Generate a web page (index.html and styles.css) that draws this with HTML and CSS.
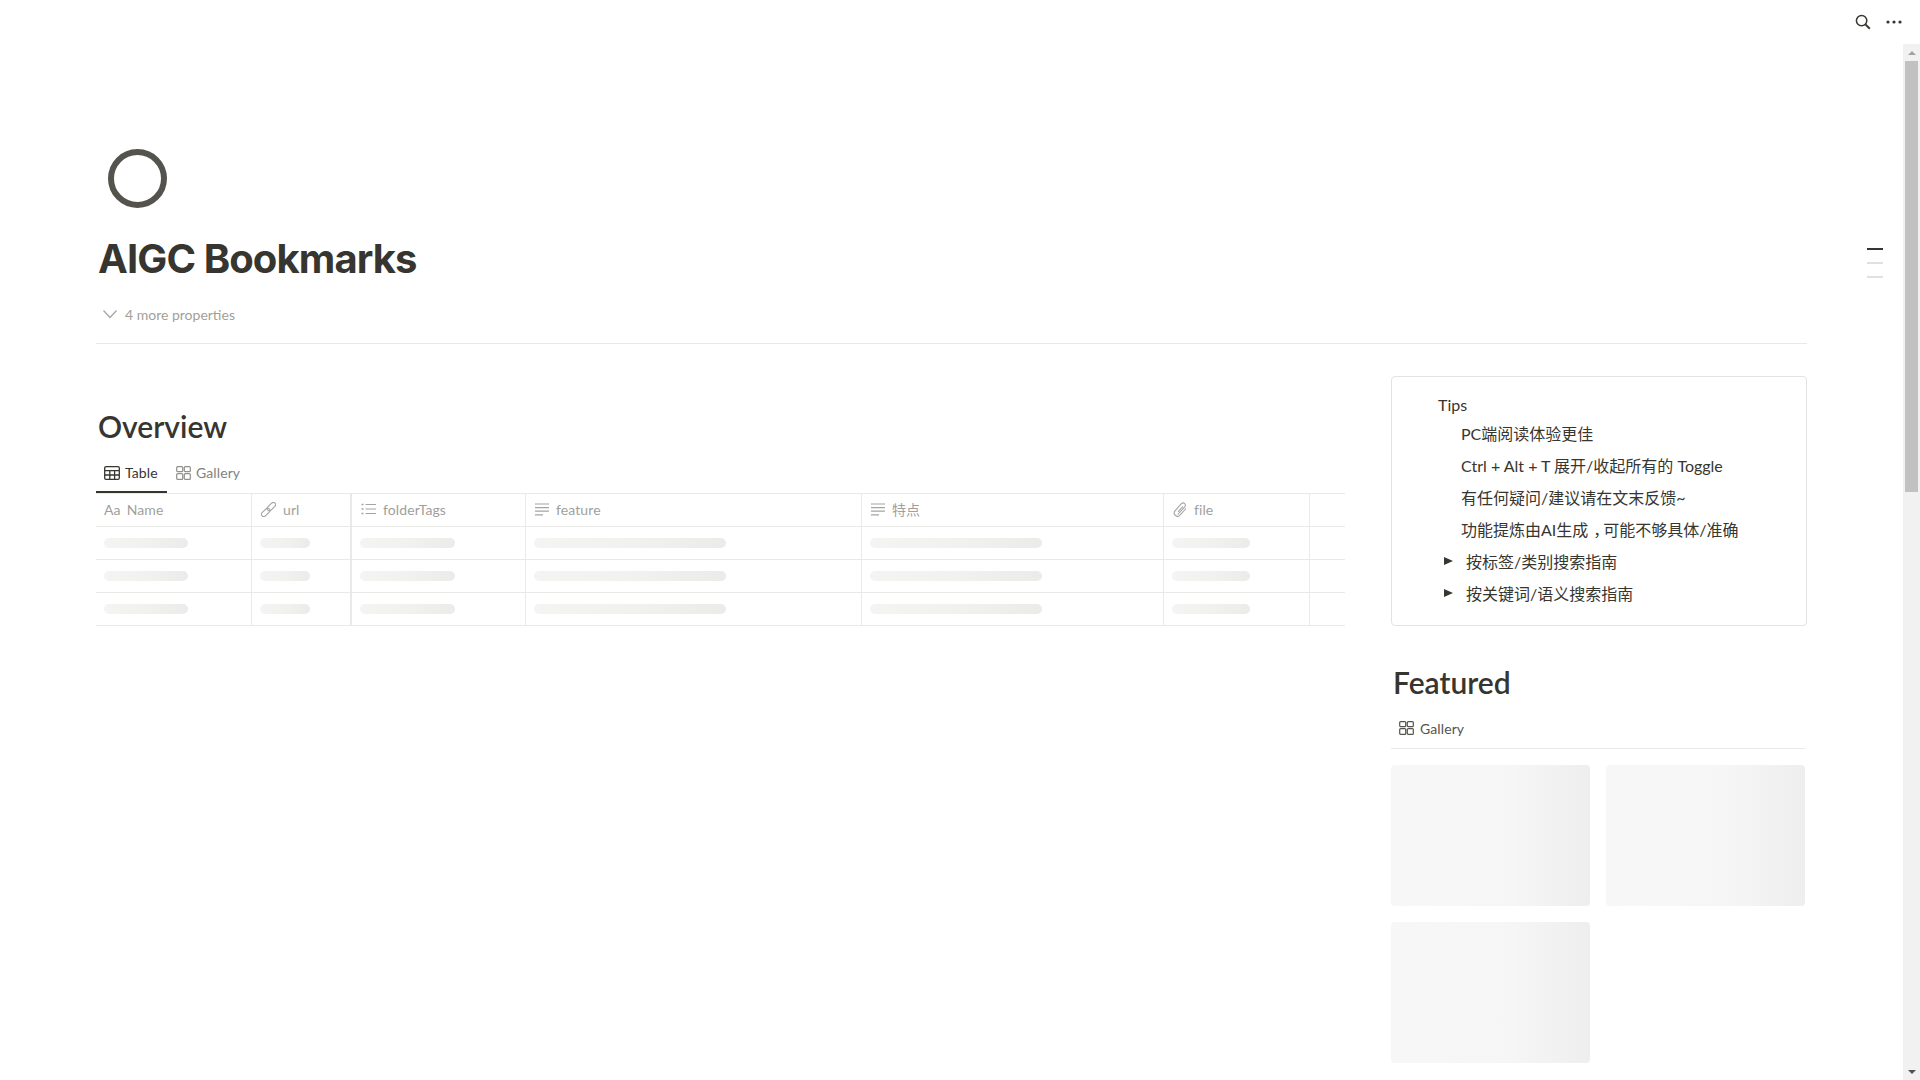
FILE: index.html
```html
<!DOCTYPE html>
<html lang="zh">
<head>
<meta charset="utf-8">
<title>AIGC Bookmarks</title>
<link rel="stylesheet" href="styles.css">
</head>
<body>
<div class="app">
  <header class="topbar">
    <svg class="top-icon" width="16" height="16" viewBox="0 0 16 16"><circle cx="6.6" cy="6.6" r="5.2" fill="none" stroke="#37352f" stroke-width="1.5"/><path d="M10.4 10.4 L14.8 14.8" stroke="#37352f" stroke-width="2"/></svg>
    <svg class="top-icon" width="16" height="4" viewBox="0 0 16 4"><circle cx="2" cy="2" r="1.6" fill="#37352f"/><circle cx="8" cy="2" r="1.6" fill="#37352f"/><circle cx="14" cy="2" r="1.6" fill="#37352f"/></svg>
  </header>
  <div class="frame">
    <main class="page">
      <div class="page-icon"></div>
      <h1 class="title">AIGC Bookmarks</h1>
      <div class="props">
        <svg width="16" height="10" viewBox="0 0 16 10"><path d="M1.5 1.5 L8 8.5 L14.5 1.5" fill="none" stroke="#a5a4a1" stroke-width="1.2"/></svg>
        <span>4 more properties</span>
      </div>
      <hr class="rule">
      <div class="columns">
        <section class="left">
          <h2 class="heading">Overview</h2>
          <div class="tabs">
            <div class="tab active">
              <svg width="16" height="14" viewBox="0 0 16 14"><path d="M2 .7h12a1.3 1.3 0 0 1 1.3 1.3v10a1.3 1.3 0 0 1-1.3 1.3H2A1.3 1.3 0 0 1 .7 12V2A1.3 1.3 0 0 1 2 .7zM.7 4.7h14.6M.7 9h14.6M5.8 4.7v8.6M10.6 4.7v8.6" fill="none" stroke="#37352f" stroke-width="1.3"/></svg>
              <span>Table</span>
            </div>
            <div class="tab">
              <svg width="15" height="14" viewBox="0 0 15 14"><path d="M1.6.7h4.2a.9.9 0 0 1 .9.9v3.1a.9.9 0 0 1-.9.9H1.6a.9.9 0 0 1-.9-.9V1.600a.9.9 0 0 1 .9-.9zM9.200.7h4.200a.9.9 0 0 1 .9.9v3.1a.9.9 0 0 1-.9.9H9.200a.9.9 0 0 1-.9-.9V1.600a.9.9 0 0 1 .9-.9zM1.600 7.700h4.200a.9.9 0 0 1 .9.9v3.800a.9.9 0 0 1-.9.9H1.600a.9.9 0 0 1-.9-.9V8.600a.9.9 0 0 1 .9-.9zM9.200 7.700h4.200a.9.9 0 0 1 .9.9v3.800a.9.9 0 0 1-.9.9H9.200a.9.9 0 0 1-.9-.9V8.600a.9.9 0 0 1 .9-.9z" fill="none" stroke="#91908c" stroke-width="1.200"/></svg>
              <span>Gallery</span>
            </div>
          </div>
          <div class="table">
            <div class="cell head c1"><span class="aa">Aa</span><span>Name</span></div>
            <div class="cell head c2">
              <svg width="15" height="15" viewBox="0 0 15 15"><g transform="rotate(-45 7.5 7.5)" fill="none" stroke="#a5a4a1" stroke-width="1.100"><rect x="-1.500" y="5.200" width="10" height="4.600" rx="2.300"/><rect x="6.500" y="5.200" width="10" height="4.600" rx="2.300"/></g></svg>
              <span>url</span></div>
            <div class="cell head c3">
              <svg width="15" height="12" viewBox="0 0 15 12"><path d="M4.500 1.500H15M4.500 6H15M4.500 10.500H15" stroke="#a5a4a1" stroke-width="1.100"/><path d="M.5 1.500h2M.5 6h2M.5 10.500h2" stroke="#a5a4a1" stroke-width="1.300"/></svg>
              <span>folderTags</span></div>
            <div class="cell head c4">
              <svg width="14" height="13" viewBox="0 0 14 13"><path d="M0 1h14M0 4.600h14M0 8.200h14M0 11.800h8" stroke="#a5a4a1" stroke-width="1.200"/></svg>
              <span>feature</span></div>
            <div class="cell head c5">
              <svg width="14" height="13" viewBox="0 0 14 13"><path d="M0 1h14M0 4.600h14M0 8.200h14M0 11.800h8" stroke="#a5a4a1" stroke-width="1.200"/></svg>
              <span>特点</span></div>
            <div class="cell head c6">
              <svg width="14" height="16" viewBox="0 0 14 16"><path d="M4.800 13.500 L11.800 5.800a2.300 2.300 0 0 0-3.400-3.100L2 9.800a3.300 3.300 0 0 0 4.800 4.500L13 7.500M5 10.800 L10 5.300" fill="none" stroke="#a5a4a1" stroke-width="1.100"/></svg>
              <span>file</span></div>
            <div class="cell c7"></div>

            <div class="cell c1"><i class="bar w1"></i></div><div class="cell c2"><i class="bar w2"></i></div><div class="cell c3"><i class="bar w3"></i></div><div class="cell c4"><i class="bar w4"></i></div><div class="cell c5"><i class="bar w5"></i></div><div class="cell c6"><i class="bar w6"></i></div><div class="cell c7"></div>
            <div class="cell c1"><i class="bar w1"></i></div><div class="cell c2"><i class="bar w2"></i></div><div class="cell c3"><i class="bar w3"></i></div><div class="cell c4"><i class="bar w4"></i></div><div class="cell c5"><i class="bar w5"></i></div><div class="cell c6"><i class="bar w6"></i></div><div class="cell c7"></div>
            <div class="cell c1"><i class="bar w1"></i></div><div class="cell c2"><i class="bar w2"></i></div><div class="cell c3"><i class="bar w3"></i></div><div class="cell c4"><i class="bar w4"></i></div><div class="cell c5"><i class="bar w5"></i></div><div class="cell c6"><i class="bar w6"></i></div><div class="cell c7"></div>
          </div>
        </section>
        <aside class="right">
          <div class="callout">
            <div class="tips-title">Tips</div>
            <div class="tip">PC端阅读体验更佳</div>
            <div class="tip">Ctrl + Alt + T 展开/收起所有的 Toggle</div>
            <div class="tip">有任何疑问/建议请在文末反馈~</div>
            <div class="tip">功能提炼由AI生成<span class="punct">，</span>可能不够具体/准确</div>
            <div class="toggle"><i class="tri"></i><span>按标签/类别搜索指南</span></div>
            <div class="toggle"><i class="tri"></i><span>按关键词/语义搜索指南</span></div>
          </div>
          <h2 class="heading featured">Featured</h2>
          <div class="gallery-block">
            <div class="gallery-tab">
              <svg width="15" height="14" viewBox="0 0 15 14"><path d="M1.600.7h4.200a.9.9 0 0 1 .9.9v3.100a.9.9 0 0 1-.9.9H1.600a.9.9 0 0 1-.9-.9V1.600a.9.9 0 0 1 .9-.9zM9.200.7h4.200a.9.9 0 0 1 .9.9v3.100a.9.9 0 0 1-.9.9H9.200a.9.9 0 0 1-.9-.9V1.600a.9.9 0 0 1 .9-.9zM1.600 7.700h4.200a.9.9 0 0 1 .9.9v3.800a.9.9 0 0 1-.9.9H1.600a.9.9 0 0 1-.9-.9V8.600a.9.9 0 0 1 .9-.9zM9.200 7.700h4.200a.9.9 0 0 1 .9.9v3.800a.9.9 0 0 1-.9.9H9.200a.9.9 0 0 1-.9-.9V8.600a.9.9 0 0 1 .9-.9z" fill="none" stroke="#55534e" stroke-width="1.200"/></svg>
              <span>Gallery</span>
            </div>
            <div class="cards">
              <div class="card"></div>
              <div class="card"></div>
              <div class="card"></div>
            </div>
          </div>
        </aside>
      </div>
      <div class="outline"><i class="mark on"></i><i class="mark"></i><i class="mark"></i></div>
    </main>
    <div class="scrollbar">
      <div class="sb-btn"><i class="sb-up"></i></div>
      <div class="sb-track"><div class="sb-thumb"></div></div>
      <div class="sb-btn"><i class="sb-down"></i></div>
    </div>
  </div>
</div>
</body>
</html>
```
FILE: styles.css
```css
* { box-sizing: border-box; }
html, body { margin: 0; height: 100%; overflow: hidden; background: #fff; }
body {
  font-family: Lato, "Noto Sans CJK SC", sans-serif;
  color: #37352f;
}
.app { display: flex; flex-direction: column; height: 100vh; }
.topbar {
  height: 44px; flex: none;
  display: flex; align-items: center; justify-content: flex-end;
  gap: 15px; padding: 0 18px 1px 0;
}
.frame { flex: 1; display: flex; min-height: 0; }
.page { flex: 1; min-width: 0; position: relative; overflow: hidden; padding: 0 96px; }
.page-icon {
  width: 59px; height: 59px; margin: 105px 0 0 12px;
  border: 6.5px solid #55534e; border-radius: 50%;
}
.title {
  margin: 27px 0 0 2px; font-family: Inter, "Noto Sans CJK SC", sans-serif;
  font-size: 40px; line-height: 48px; font-weight: 700; letter-spacing: -0.9px;
}
.props {
  display: flex; align-items: center; gap: 7px;
  height: 24px; margin: 19px 0 0 6px;
  font-size: 14px; color: #a09f9c;
}
.rule { margin: 17px 0 0; border: 0; height: 1px; background: #e9e9e7; }
.columns { display: flex; gap: 46px; margin-top: 32px; }
.left { width: 1249px; flex: none; padding-top: 30px; }
.right { width: 416px; flex: none; }
.heading { margin: 0 0 0 2px; font-size: 30px; line-height: 40px; font-weight: 600; }
.tabs { display: flex; height: 39px; margin-top: 8px; }
.tab {
  display: flex; align-items: center; gap: 5px;
  padding: 0 8px; font-size: 14px; letter-spacing: .1px; color: #83827e;
  border-bottom: 2px solid transparent;
}
.tab.active { color: #37352f; border-bottom-color: #37352f; width: 71px; }
.tab + .tab { padding-left: 9px; }
.table {
  display: grid;
  grid-template-columns: 156px 100px 174px 336px 302px 146px 35px;
  grid-auto-rows: 33px;
  border-top: 1px solid #e9e9e7;
}
.cell {
  display: flex; align-items: center; gap: 7px;
  padding: 0 8px;
  border-bottom: 1px solid #e9e9e7;
  border-right: 1px solid #e9e9e7;
}
.cell.c7 { border-right: 0; }
.cell.c2 { border-right-width: 2px; }
.head { font-size: 14px; letter-spacing: .1px; color: #a09f9c; padding-left: 9px; padding-bottom: 2px; }
.head.c1 { padding-left: 8px; gap: 6px; }
.head svg { flex: none; }
.aa { font-size: 14px; color: #a09f9c; }
.bar {
  display: block; height: 10px; border-radius: 6px;
  background: linear-gradient(90deg, #f4f4f3 0%, #f1f1f0 50%, #ebebea 100%);
}
.w1 { width: 84px; }
.w2 { width: 50px; }
.w3 { width: 95px; }
.w4 { width: 192px; }
.w5 { width: 172px; }
.w6 { width: 78px; }
.callout {
  height: 250px; border: 1px solid #e3e3e1; border-radius: 4px;
  padding: 14px 0 14px 46px; font-size: 16px;
}
.tips-title { line-height: 27px; }
.tip { line-height: 32px; padding-left: 23px; }
.punct { margin-left: 5px; letter-spacing: -6px; }
.toggle { display: flex; align-items: center; height: 32px; padding: 0 0 3px 6px; gap: 13px; }
.tri {
  width: 0; height: 0; flex: none;
  border-left: 9px solid #37352f;
  border-top: 4.5px solid transparent;
  border-bottom: 4.5px solid transparent;
}
.featured { margin-top: 36px; margin-left: 2px; }
.gallery-block { padding-right: 2px; }
.gallery-tab {
  display: flex; align-items: center; gap: 6px;
  height: 47px; padding: 6px 0 0 8px;
  border-bottom: 1px solid #e9e9e7;
  font-size: 14px; letter-spacing: .1px; color: #55534e;
}
.cards { display: grid; grid-template-columns: 199px 199px; gap: 16px; margin-top: 16px; }
.card {
  height: 141px; border-radius: 4px;
  background: linear-gradient(90deg, #f7f7f7 0%, #f6f6f6 60%, #eeeeee 100%);
}
.outline {
  position: absolute; top: 204px; left: 1867px;
  display: flex; flex-direction: column; gap: 12px;
}
.mark { display: block; width: 16px; height: 2px; background: #e0e0e0; }
.mark.on { background: #37352f; }
.scrollbar { width: 17px; flex: none; background: #f1f1f1; display: flex; flex-direction: column; }
.sb-btn { height: 17px; flex: none; display: flex; align-items: center; justify-content: center; }
.sb-up { width: 0; height: 0; border: 4px solid transparent; border-top: 0; border-bottom: 4px solid #a3a3a3; }
.sb-down { width: 0; height: 0; border: 4px solid transparent; border-bottom: 0; border-top: 4px solid #505050; }
.sb-track { flex: 1; padding: 0 2px; }
.sb-thumb { height: 431px; background: #c1c1c1; }
```
